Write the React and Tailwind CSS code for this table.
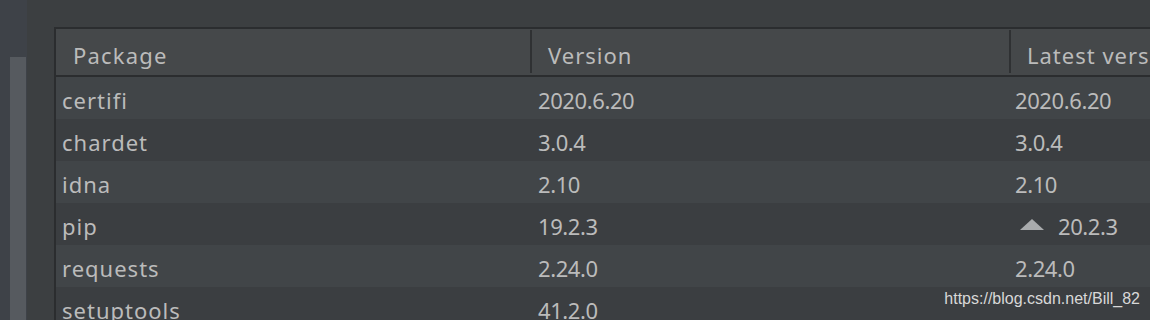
import React from "react";

const rows = [
  ["certifi", "2020.6.20", "2020.6.20", false],
  ["chardet", "3.0.4", "3.0.4", false],
  ["idna", "2.10", "2.10", false],
  ["pip", "19.2.3", "20.2.3", true],
  ["requests", "2.24.0", "2.24.0", false],
  ["setuptools", "41.2.0", "", false],
];

export default function App() {
  return (
    <div
      className="relative w-[1150px] h-[320px] overflow-hidden bg-[#3c3f41] flex text-[#bbbbbb] text-[22px] leading-none"
      style={{ fontFamily: '"Noto Sans", "Open Sans", sans-serif' }}
    >
      <div className="w-[27px] bg-[#3e4248] flex flex-col pt-[57px] pl-[10px] shrink-0">
        <div className="w-[16px] flex-1 bg-[#565a5f]" />
      </div>
      <div className="w-[27px] shrink-0" />
      <div className="flex-1 mt-[27px] border-l-2 border-t-2 border-[#2b2d2f] flex flex-col min-w-0">
        <div className="h-[48px] bg-[#45484a] border-b-2 border-[#2b2d2f] grid grid-cols-[474px_479px_1fr] shrink-0">
          <div className="flex items-center pl-[17px] pt-[5px] tracking-[1.2px]">Package</div>
          <div className="flex items-center">
            <div className="w-[2px] h-[43px] bg-[#2f3133] mb-[1px]" />
            <span className="pl-[16px] pt-[5px] tracking-[1px]">Version</span>
          </div>
          <div className="flex items-center whitespace-nowrap overflow-hidden">
            <div className="w-[2px] h-[43px] bg-[#2f3133] mb-[1px] shrink-0" />
            <span className="pl-[16px] pt-[5px] tracking-[1px]">Latest version</span>
          </div>
        </div>
        {rows.map(([name, ver, latest, up], i) => (
          <div
            key={name}
            className={
              "h-[42px] shrink-0 grid grid-cols-[474px_479px_1fr] " +
              (i % 2 === 0 ? "bg-[#414548]" : "bg-[#3b3e41]")
            }
          >
            <div className="flex items-center pl-[6px] pt-[4px] tracking-[1px]">{name}</div>
            <div className="flex items-center pl-[8px] pt-[4px] tracking-[-0.4px]">{ver}</div>
            <div className="flex items-center pl-[6px] pt-[4px] tracking-[-0.4px]">
              {up && (
                <svg width="24" height="11" viewBox="0 0 24 11" className="ml-[5px] mr-[14px] mb-[3px]">
                  <polygon points="12,0 24,11 0,11" fill="#a9abad" />
                </svg>
              )}
              {latest}
            </div>
          </div>
        ))}
      </div>
      <div
        className="absolute right-[10px] top-[291px] text-[16px] leading-none text-[#d8d8d8]"
        style={{ fontFamily: '"Liberation Sans", Arial, sans-serif' }}
      >
        https://blog.csdn.net/Bill_82
      </div>
    </div>
  );
}
